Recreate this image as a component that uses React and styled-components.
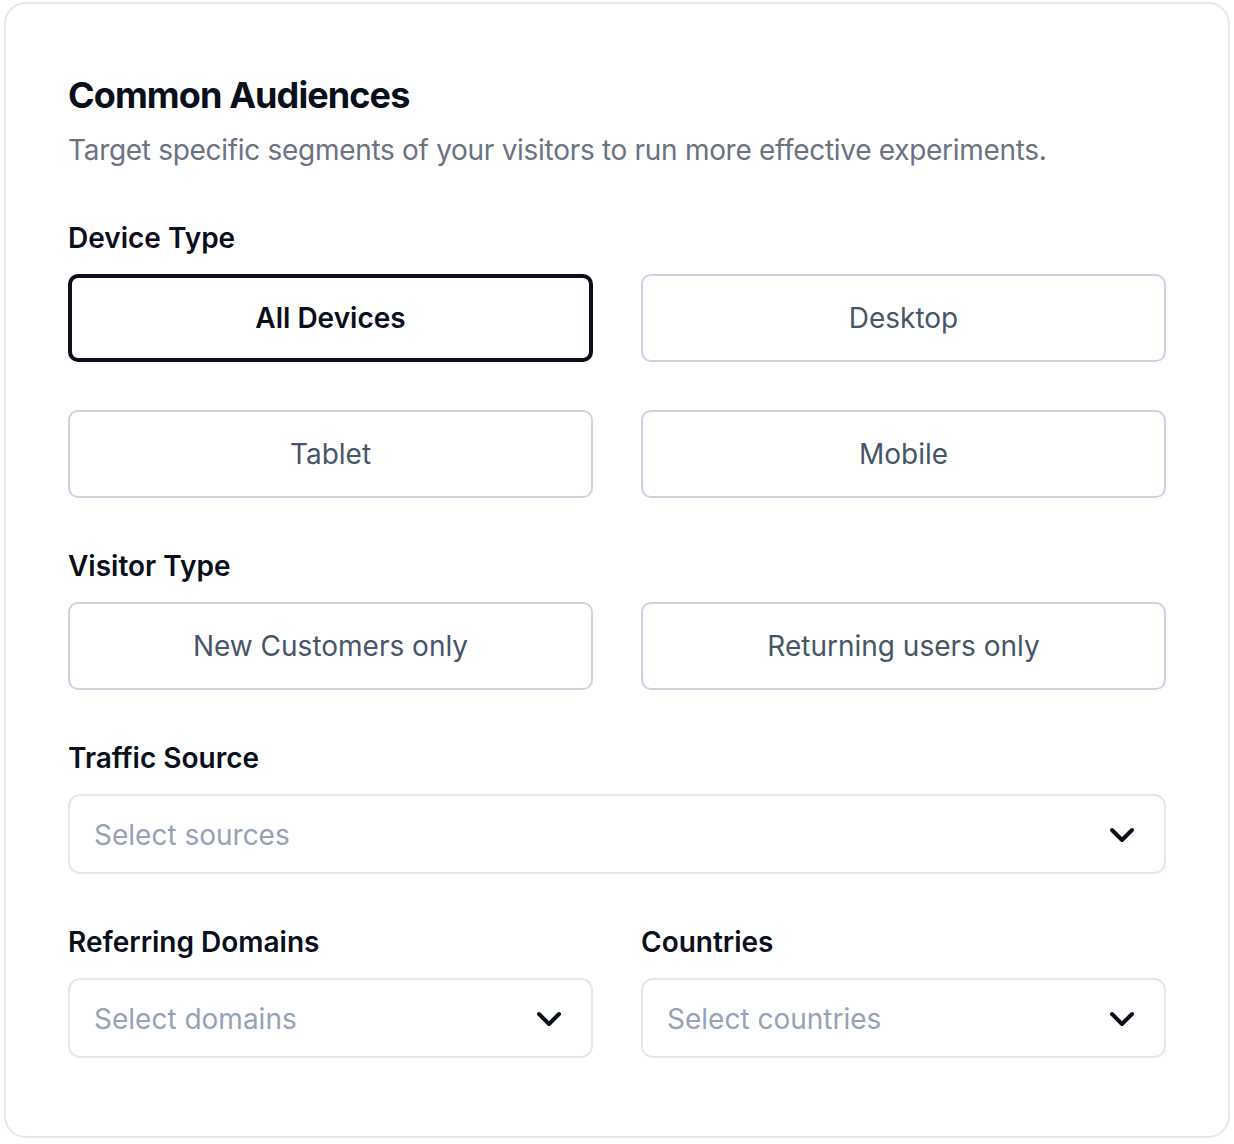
import React from "react";
import styled, { createGlobalStyle } from "styled-components";

const GlobalStyle = createGlobalStyle`
  * {
    box-sizing: border-box;
  }

  body {
    margin: 0;
    background: #ffffff;
    font-family: Inter, "Noto Sans", "Liberation Sans", sans-serif;
    -webkit-font-smoothing: antialiased;
  }
`;

const ChevronDown = () => (
  <svg
    width="40"
    height="40"
    viewBox="0 0 24 24"
    fill="none"
    stroke="currentColor"
    strokeWidth="2.4"
    strokeLinecap="round"
    strokeLinejoin="round"
  >
    <path d="m6 9 6 6 6-6" />
  </svg>
);

const deviceOptions = ["All Devices", "Desktop", "Tablet", "Mobile"];
const visitorOptions = ["New Customers only", "Returning users only"];

const App = () => {
  return (
    <Page>
      <GlobalStyle />
      <Card>
        <Header>
          <Title>Common Audiences</Title>
          <Subtitle>
            Target specific segments of your visitors to run more effective
            experiments.
          </Subtitle>
        </Header>

        <Section>
          <Label>Device Type</Label>
          <OptionGrid>
            {deviceOptions.map((option) => (
              <OptionButton key={option} $active={option === "All Devices"}>
                {option}
              </OptionButton>
            ))}
          </OptionGrid>
        </Section>

        <Section>
          <Label>Visitor Type</Label>
          <OptionGrid>
            {visitorOptions.map((option) => (
              <OptionButton key={option}>{option}</OptionButton>
            ))}
          </OptionGrid>
        </Section>

        <Section>
          <Label>Traffic Source</Label>
          <Select>
            <Placeholder>Select sources</Placeholder>
            <ChevronDown />
          </Select>
        </Section>

        <FieldRow>
          <Section>
            <Label>Referring Domains</Label>
            <Select>
              <Placeholder>Select domains</Placeholder>
              <ChevronDown />
            </Select>
          </Section>
          <Section>
            <Label>Countries</Label>
            <Select>
              <Placeholder>Select countries</Placeholder>
              <ChevronDown />
            </Select>
          </Section>
        </FieldRow>
      </Card>
    </Page>
  );
};

const Page = styled.div`
  padding: 2px 4px 6px 4px;
`;

const Card = styled.div`
  display: flex;
  flex-direction: column;
  gap: 48px;
  border: 2px solid #e5e7eb;
  border-radius: 22px;
  padding: 64px 62px 78px 62px;
  background: #ffffff;
`;

const Header = styled.div`
  display: flex;
  flex-direction: column;
  gap: 8px;
`;

const Title = styled.h2`
  margin: 0;
  font-size: 36px;
  line-height: 54px;
  font-weight: 700;
  letter-spacing: -0.9px;
  color: #0a0f1c;
`;

const Subtitle = styled.p`
  margin: 0;
  font-size: 28px;
  line-height: 40px;
  letter-spacing: -0.3px;
  color: #6b7280;
`;

const Section = styled.div`
  display: flex;
  flex-direction: column;
  gap: 16px;
`;

const Label = styled.span`
  font-size: 28px;
  line-height: 40px;
  font-weight: 600;
  color: #0a0f1c;
`;

const OptionGrid = styled.div`
  display: grid;
  grid-template-columns: 1fr 1fr;
  gap: 48px;
`;

const OptionButton = styled.button`
  height: 88px;
  border: ${(p) => (p.$active ? "4px solid #0b0f19" : "2px solid #cbd5e1")};
  border-radius: 10px;
  background: #ffffff;
  font-family: inherit;
  font-size: 28px;
  font-weight: ${(p) => (p.$active ? 600 : 400)};
  color: ${(p) => (p.$active ? "#0a0f1c" : "#475569")};
  cursor: pointer;
`;

const FieldRow = styled.div`
  display: grid;
  grid-template-columns: 1fr 1fr;
  gap: 48px;
`;

const Select = styled.div`
  display: flex;
  align-items: center;
  justify-content: space-between;
  height: 80px;
  padding: 1px 22px 0 24px;
  border: 2px solid #e5e7eb;
  border-radius: 12px;
  color: #0a0f1c;
`;

const Placeholder = styled.span`
  font-size: 28px;
  color: #94a3b8;
`;

export default App;
